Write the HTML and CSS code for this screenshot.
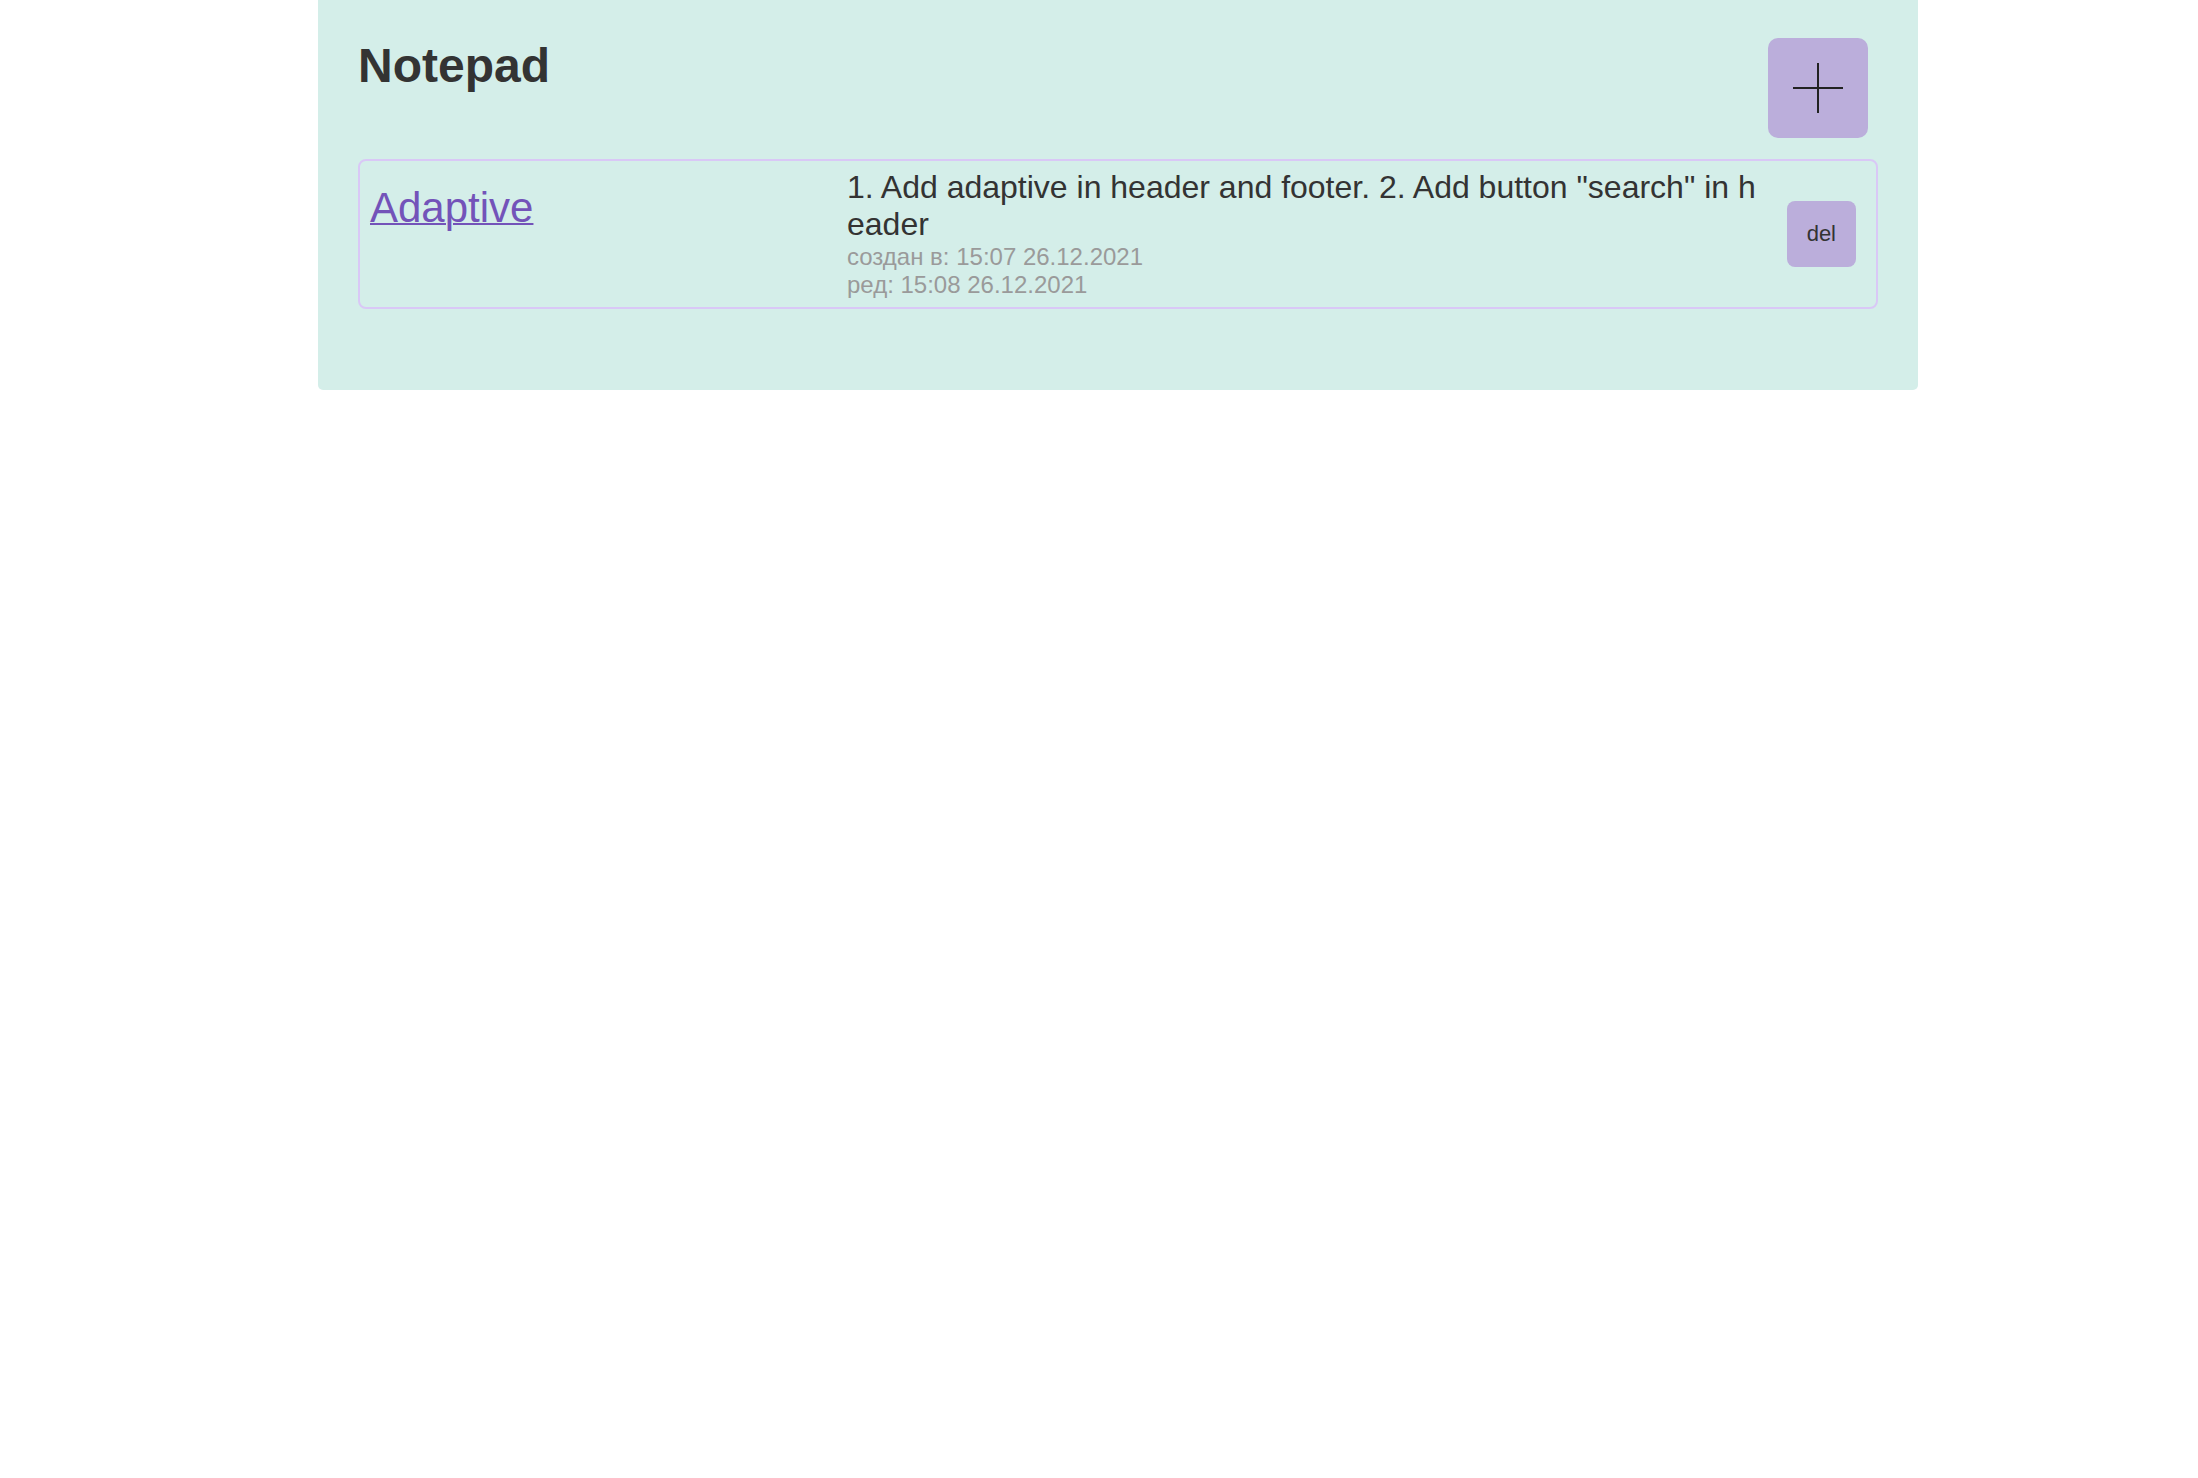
FILE: index.html
```html
<!DOCTYPE html>
<html lang="en">
<head>
<meta charset="utf-8">
<title>Notepad</title>
<link rel="stylesheet" href="styles.css">
</head>
<body>
<main class="notepad">
  <header class="notepad-header">
    <h1 class="notepad-title">Notepad</h1>
    <button class="add-btn" aria-label="add">
      <svg width="50" height="50" viewBox="0 0 50 50"><path d="M0 25H50M25 0V50" stroke="#222" stroke-width="2" fill="none"/></svg>
    </button>
  </header>
  <section class="note">
    <div class="note-title-col">
      <a class="note-title" href="#">Adaptive</a>
    </div>
    <div class="note-body">
      <div class="note-text">1. Add adaptive in header and footer. 2. Add button "search" in header</div>
      <div class="note-meta">создан в: 15:07 26.12.2021</div>
      <div class="note-meta">ред: 15:08 26.12.2021</div>
    </div>
    <button class="del-btn">del</button>
  </section>
</main>
</body>
</html>
```

FILE: styles.css
```css
html, body {
  margin: 0;
  padding: 0;
  background: #fff;
}
body {
  font-family: "Liberation Sans", Arial, sans-serif;
  color: #333;
}
.notepad {
  box-sizing: border-box;
  width: 1600px;
  margin-left: 318px;
  background: #d4eee9;
  border-radius: 0 0 5px 5px;
  padding: 38px 40px 81px;
}
.notepad-header {
  display: flex;
  justify-content: space-between;
  align-items: flex-start;
  margin-bottom: 21px;
}
.notepad-title {
  margin: 0;
  font-size: 48px;
  font-weight: bold;
  line-height: normal;
  color: #333;
}
.add-btn {
  width: 100px;
  height: 100px;
  margin-right: 10px;
  border: none;
  border-radius: 10px;
  background: #bbaedb;
  display: flex;
  align-items: center;
  justify-content: center;
  padding: 0;
}
.add-btn svg {
  display: block;
}
.note {
  display: flex;
  align-items: center;
  border: 2px solid #d9c8f6;
  border-radius: 8px;
  padding: 8px 20px 8px 10px;
}
.note-title-col {
  flex: 0 0 477px;
  align-self: flex-start;
  padding-top: 15px;
}
.note-title {
  font-size: 42px;
  color: #7353b9;
  text-decoration: underline;
  text-decoration-thickness: 2px;
}
.note-body {
  flex: 1;
  min-width: 0;
  word-break: break-all;
}
.note-text {
  font-size: 32px;
  line-height: normal;
  color: #333;
}
.note-meta {
  font-size: 24px;
  color: #9a9a9a;
}
.del-btn {
  margin-left: 20px;
  flex: 0 0 auto;
  border: none;
  border-radius: 8px;
  background: #bbaedb;
  font-family: "Liberation Sans", Arial, sans-serif;
  font-size: 22px;
  color: #333;
  padding: 20px;
}
```
